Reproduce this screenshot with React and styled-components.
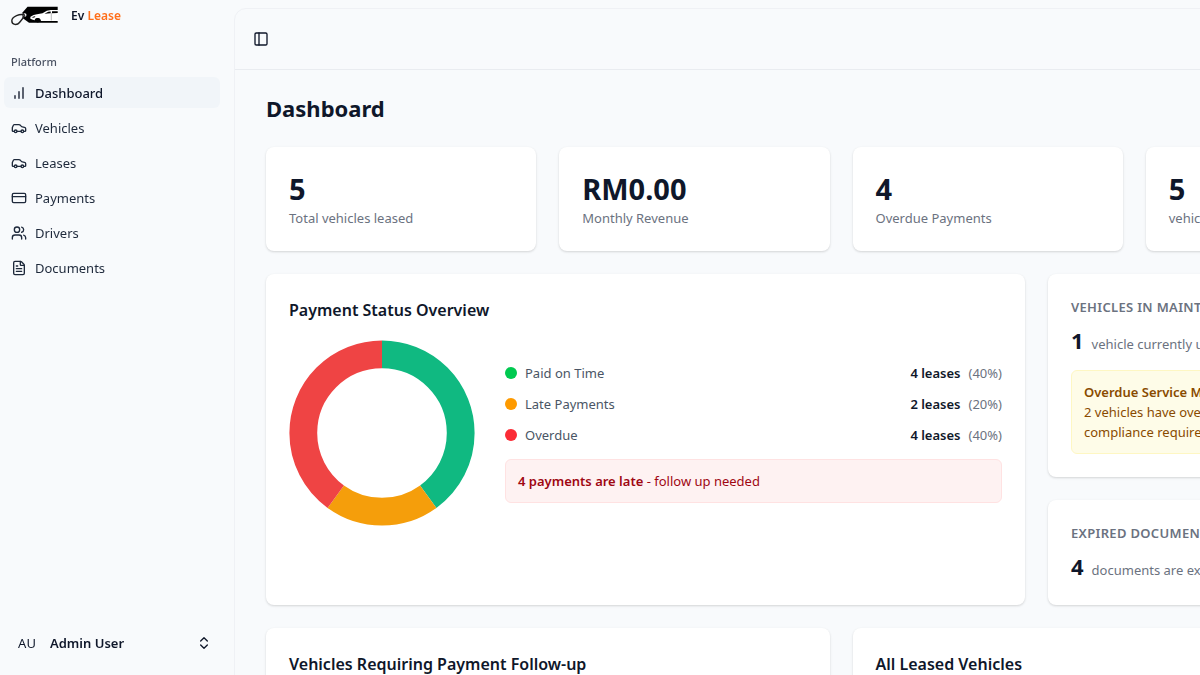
import React from 'react'
import styled, { createGlobalStyle } from 'styled-components'
import {
  Car, ChevronsUpDown, CreditCard, FileText, PanelLeft, Users,
} from 'lucide-react'

const GlobalStyle = createGlobalStyle`
  * {
    box-sizing: border-box;
  }
  html {
    overflow-x: hidden;
    scrollbar-width: none;
  }
  body {
    margin: 0;
    background: #f8fafc;
    color: #0f172a;
    font-family: 'Segoe UI', 'Noto Sans', 'Open Sans', sans-serif;
    font-size: 13px;
    line-height: 20px;
  }
  h1, h2, h3, p, ul {
    margin: 0;
    padding: 0;
  }
`

const Shell = styled.div`
  display: flex;
  min-width: 1456px;
  min-height: 100vh;
`

const Sidebar = styled.aside`
  position: sticky;
  top: 0;
  display: flex;
  flex-direction: column;
  flex: 0 0 234px;
  height: 100vh;
  padding: 0 14px 9px 4px;
`

const Brand = styled.a`
  display: flex;
  align-items: center;
  gap: 12px;
  height: 32px;
  padding-left: 7px;
  color: #0f172a;
  font-weight: 600;
  font-size: 12px;
  text-decoration: none;
`

const BrandAccent = styled.span`
  color: #ff6f1a;
`

const GroupLabel = styled.div`
  margin-top: 15px;
  padding: 5px 7px;
  height: 30px;
  color: #4a5263;
  font-size: 11px;
  font-weight: 500;
`

const Menu = styled.ul`
  display: flex;
  flex-direction: column;
  gap: 4px;
  list-style: none;
`

const MenuLink = styled.a`
  display: flex;
  align-items: center;
  gap: 8px;
  height: 31px;
  padding: 0 7px;
  border-radius: 6px;
  background: ${(props) => (props.$active ? '#f1f5f9' : 'transparent')};
  color: ${(props) => (props.$active ? '#0f172a' : '#1e293b')};
  font-weight: ${(props) => (props.$active ? 500 : 400)};
  text-decoration: none;
`

const UserButton = styled.button`
  display: flex;
  align-items: center;
  gap: 8px;
  height: 46px;
  margin-top: auto;
  padding: 0 8px;
  border: 0;
  background: transparent;
  color: #0f172a;
  font: inherit;
`

const Avatar = styled.span`
  width: 30px;
  text-align: center;
`

const UserName = styled.span`
  flex: 1;
  font-weight: 600;
  text-align: left;
`

const Main = styled.main`
  flex: 1;
  min-width: 0;
  margin: 8px 8px 8px 0;
  border: 1px solid #eff1f5;
  border-radius: 12px;
`

const TopBar = styled.header`
  display: flex;
  align-items: center;
  height: 61px;
  padding: 0 16px;
  border-bottom: 1px solid #e9ecf0;
`

const IconButton = styled.button`
  display: flex;
  padding: 2px;
  border: 0;
  background: transparent;
  color: #0f172a;
`

const Content = styled.div`
  display: flex;
  flex-direction: column;
  gap: 23px;
  padding: 23px 31px;
`

const PageTitle = styled.h1`
  font-size: 22px;
  font-weight: 700;
  line-height: 31px;
`

const Grid = styled.div`
  display: grid;
  grid-template-columns: repeat(${(props) => props.$columns}, minmax(0, 1fr));
  gap: 23px;
`

const Card = styled.section`
  padding: 23px;
  grid-column: span ${(props) => props.$span || 1};
  border-radius: 8px;
  background: #fff;
  box-shadow: 0 1px 3px rgba(0, 0, 0, 0.1), 0 1px 2px rgba(0, 0, 0, 0.06);
`

const Stack = styled.div`
  display: flex;
  flex-direction: column;
  gap: 23px;
`

const StatValue = styled.p`
  font-size: 29px;
  font-weight: 700;
  line-height: 38px;
`

const Muted = styled.p`
  color: #6b7280;
`

const CardTitle = styled.h2`
  font-size: 16px;
  font-weight: 600;
  line-height: 27px;
`

const Overview = styled.div`
  display: flex;
  align-items: center;
  gap: 30px;
  margin-top: 16px;
`

const Details = styled.div`
  flex: 1;
  display: flex;
  flex-direction: column;
  gap: 11px;
`

const LegendRow = styled.div`
  display: flex;
  align-items: center;
  gap: 8px;
  color: #4a5565;
`

const Dot = styled.span`
  width: 12px;
  height: 12px;
  border-radius: 50%;
  background: ${(props) => props.$color};
`

const LegendCount = styled.strong`
  margin-left: auto;
  color: #0f172a;
  font-weight: 600;
`

const Percent = styled.span`
  color: #6b7280;
`

const Alert = styled.div`
  padding: 11px 12px;
  margin-top: ${(props) => (props.$tone === 'red' ? '3px' : '14px')};
  border: 1px solid ${(props) => (props.$tone === 'red' ? '#ffe2e2' : '#fef7c3')};
  border-radius: 6px;
  background: ${(props) => (props.$tone === 'red' ? '#fef2f2' : '#fefce8')};
  color: ${(props) => (props.$tone === 'red' ? '#9f0712' : '#894b00')};
  white-space: nowrap;
`

const AlertStrong = styled.strong`
  font-weight: 600;
`

const Eyebrow = styled.h3`
  color: #6b7280;
  font-size: 13px;
  font-weight: 600;
  letter-spacing: 0.025em;
  text-transform: uppercase;
  white-space: nowrap;
`

const CountLine = styled.p`
  display: flex;
  align-items: baseline;
  gap: 8px;
  margin-top: 8px;
  color: #6b7280;
  line-height: 20px;
  white-space: nowrap;
`

const Count = styled.strong`
  color: #0f172a;
  font-size: 22px;
  font-weight: 700;
  line-height: 31px;
`

function Logo() {
  return (
    <svg width="48" height="20" viewBox="0 0 48 20" aria-hidden="true">
      <path d="M16.500 .7H46.700V16.800H18L11.500 12V6.500Z" fill="#000" />
      <path d="M19.500 10.800Q22.500 8.500 26 8.200L31.500 7.300Q36 4.200 40 4.100H47V14.900H30Q29.500 11.900 26.700 11.900T23.700 14.200L21 13.500 19.200 12.400Z" fill="#fff" />
      <path d="M33.500 7.700 37.300 5.800 39.700 5.400V7.300ZM41 5.300H46.700V7L41 7.300ZM20.500 11.200 24.500 9.900 23.200 11.800Z" fill="#000" />
      <path d="M40.300 7V14.500" fill="none" stroke="#777" strokeWidth=".5" />
      <circle cx="26.700" cy="14.200" r="2.200" fill="#000" />
      <circle cx="13.800" cy="9" r="1.700" fill="#fff" />
      <path d="M13.800 9C9 7.300 1 10.200 .8 14.800C.8 19.200 6.200 19.400 8.500 16.500C10.200 14.300 12.500 12.200 13.800 9" fill="none" stroke="#222" strokeWidth="1.400" />
    </svg>
  )
}

function BarsIcon() {
  return (
    <svg width="16" height="16" viewBox="0 0 24 24" fill="none" stroke="currentColor" strokeWidth="2" strokeLinecap="round" aria-hidden="true">
      <path d="M6 20V16M12 20V10M18 20V4" />
    </svg>
  )
}

const menu = [
  { label: 'Dashboard', icon: BarsIcon, active: true },
  { label: 'Vehicles', icon: Car },
  { label: 'Leases', icon: Car },
  { label: 'Payments', icon: CreditCard },
  { label: 'Drivers', icon: Users },
  { label: 'Documents', icon: FileText },
]

const stats = [
  { value: '5', label: 'Total vehicles leased' },
  { value: 'RM0.00', label: 'Monthly Revenue' },
  { value: '4', label: 'Overdue Payments' },
  { value: '5', label: 'vehicles available' },
]

const statuses = [
  { label: 'Paid on Time', count: 4, percent: 40, dot: '#00c950', slice: '#10b981' },
  { label: 'Late Payments', count: 2, percent: 20, dot: '#fe9a00', slice: '#f59e0b' },
  { label: 'Overdue', count: 4, percent: 40, dot: '#fb2c36', slice: '#ef4444' },
]

function Donut() {
  let start = 0
  return (
    <svg width="186" height="186" viewBox="0 0 186 186" role="img" aria-label="Payment status">
      <g transform="rotate(-90 93 93)">
        {statuses.map((status) => {
          const offset = -start
          start += status.percent
          return (
            <circle
              key={status.label}
              cx="93"
              cy="93"
              r="78.7"
              fill="none"
              stroke={status.slice}
              strokeWidth="27.8"
              pathLength="100"
              strokeDasharray={`${status.percent} ${100 - status.percent}`}
              strokeDashoffset={offset}
            />
          )
        })}
      </g>
    </svg>
  )
}

export default function App() {
  return (
    <>
      <GlobalStyle />
      <Shell>
        <Sidebar>
          <Brand href="#">
            <Logo />
            <span>Ev <BrandAccent>Lease</BrandAccent></span>
          </Brand>
          <GroupLabel>Platform</GroupLabel>
          <nav>
            <Menu>
              {menu.map(({ label, icon: Icon, active }) => (
                <li key={label}>
                  <MenuLink href="#" $active={active}>
                    <Icon size={16} />
                    {label}
                  </MenuLink>
                </li>
              ))}
            </Menu>
          </nav>
          <UserButton type="button">
            <Avatar>AU</Avatar>
            <UserName>Admin User</UserName>
            <ChevronsUpDown size={16} />
          </UserButton>
        </Sidebar>
        <Main>
          <TopBar>
            <IconButton type="button" aria-label="Toggle sidebar">
              <PanelLeft size={16} />
            </IconButton>
          </TopBar>
          <Content>
            <PageTitle>Dashboard</PageTitle>
            <Grid $columns={4}>
              {stats.map((stat) => (
                <Card key={stat.label}>
                  <StatValue>{stat.value}</StatValue>
                  <Muted>{stat.label}</Muted>
                </Card>
              ))}
            </Grid>
            <Grid $columns={3}>
              <Card $span={2}>
                <CardTitle>Payment Status Overview</CardTitle>
                <Overview>
                  <Donut />
                  <Details>
                    {statuses.map((status) => (
                      <LegendRow key={status.label}>
                        <Dot $color={status.dot} />
                        {status.label}
                        <LegendCount>{status.count} leases</LegendCount>
                        <Percent>({status.percent}%)</Percent>
                      </LegendRow>
                    ))}
                    <Alert $tone="red">
                      <AlertStrong>4 payments are late</AlertStrong> - follow up needed
                    </Alert>
                  </Details>
                </Overview>
              </Card>
              <Stack>
                <Card>
                  <Eyebrow>Vehicles in Maintenance</Eyebrow>
                  <CountLine><Count>1</Count>vehicle currently under maintenance</CountLine>
                  <Alert $tone="yellow">
                    <AlertStrong>Overdue Service Maintenance</AlertStrong>
                    <p>2 vehicles have overdue service,</p>
                    <p>compliance required</p>
                  </Alert>
                </Card>
                <Card>
                  <Eyebrow>Expired Documents</Eyebrow>
                  <CountLine><Count>4</Count>documents are expired</CountLine>
                </Card>
              </Stack>
            </Grid>
            <Grid $columns={2}>
              <Card>
                <CardTitle>Vehicles Requiring Payment Follow-up</CardTitle>
              </Card>
              <Card>
                <CardTitle>All Leased Vehicles</CardTitle>
              </Card>
            </Grid>
          </Content>
        </Main>
      </Shell>
    </>
  )
}
